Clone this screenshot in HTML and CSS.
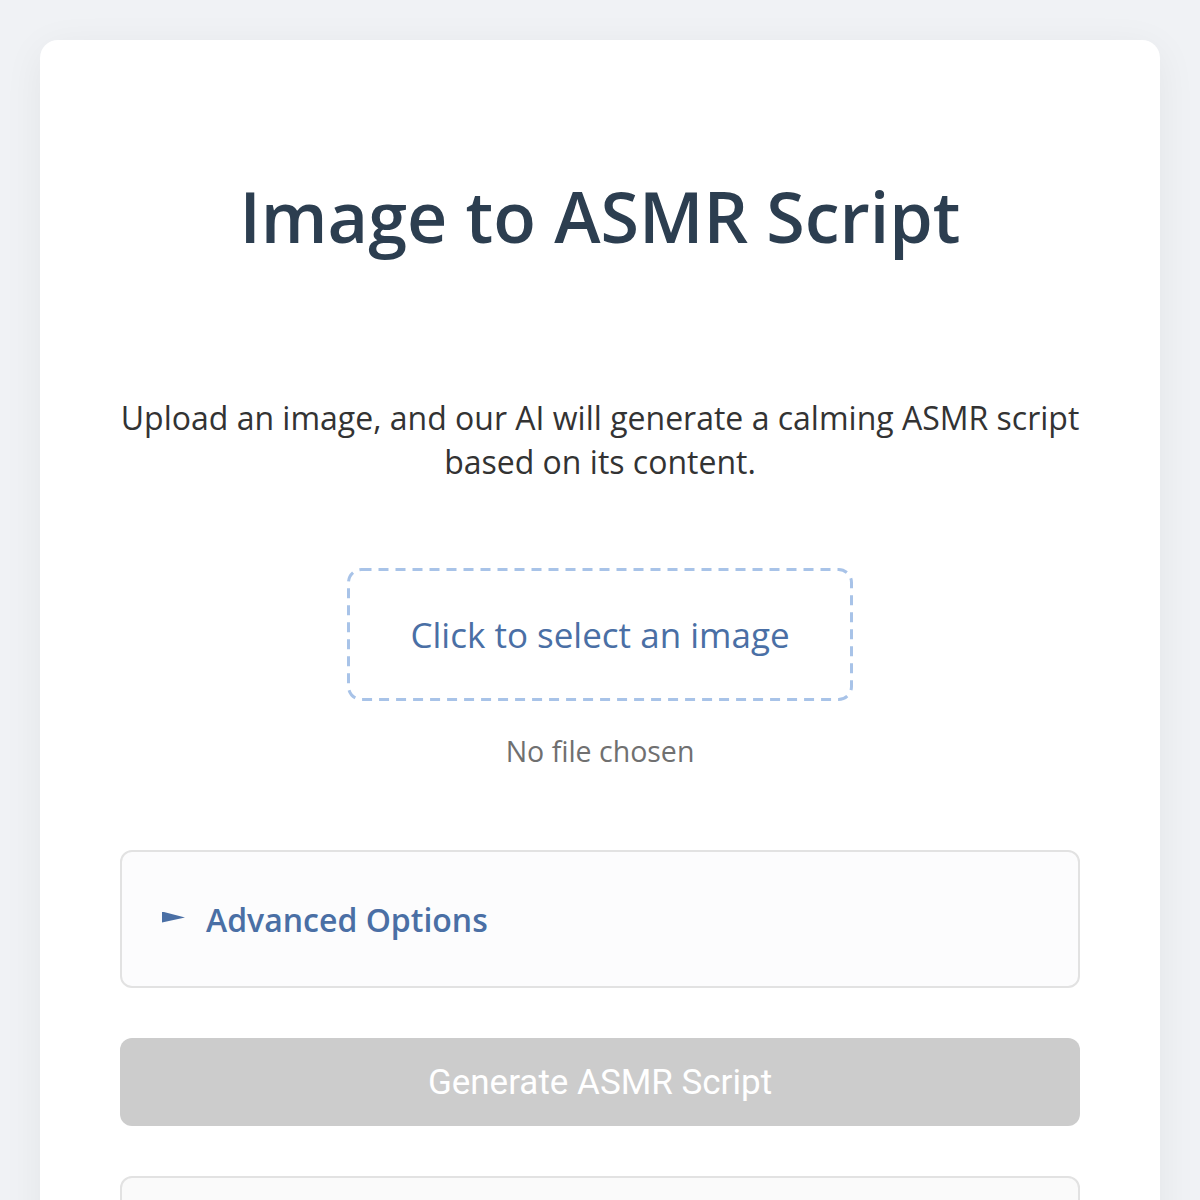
FILE: index.html
```html
<!DOCTYPE html>
<html lang="en">
<head>
    <meta charset="UTF-8">
    <meta name="viewport" content="width=device-width, initial-scale=1.0">
    <title>Image to ASMR Script</title>
    <link rel="stylesheet" href="styles.css">
</head>
<body>
    <div class="container">
        <h1>Image to ASMR Script</h1>
        <p class="intro">Upload an image, and our AI will generate a calming ASMR script based on its content.</p>

        <div class="upload">
            <label class="upload-box" for="imageInput">Click to select an image</label>
            <input type="file" id="imageInput" accept="image/*">
            <div class="file-name">No file chosen</div>
        </div>

        <details class="options">
            <summary>Advanced Options</summary>
        </details>

        <button class="generate" disabled>Generate ASMR Script</button>

        <div class="result">
            <!-- Script will appear here -->
        </div>
    </div>
</body>
</html>
```

FILE: styles.css
```css
body {
    font-family: "Open Sans", sans-serif;
    margin: 0;
    padding: 40px;
    background: #f0f2f5;
    color: #333;
}
.container {
    background: white;
    padding: 80px 80px 40px;
    border-radius: 18px;
    box-shadow: 0 8px 40px rgba(0, 0, 0, 0.06);
    min-height: 1200px;
}
h1 {
    text-align: center;
    color: #2c3e50;
    font-size: 70px;
    font-weight: 600;
    margin: 54px 0 0;
    line-height: 1.2;
}
.intro {
    text-align: center;
    font-size: 32px;
    line-height: 44px;
    margin: 138px 0 0;
}
.upload {
    text-align: center;
    margin-top: 84px;
}
.upload-box {
    display: inline-block;
    width: 506px;
    height: 133px;
    line-height: 133px;
    background: url("data:image/svg+xml,%3Csvg xmlns='http://www.w3.org/2000/svg' width='506' height='133'%3E%3Crect x='1.5' y='1.5' width='503' height='130' rx='13' fill='none' stroke='%23a8c3e8' stroke-width='3' stroke-dasharray='10 7'/%3E%3C/svg%3E") no-repeat;
    color: #4a6fa5;
    font-size: 35px;
    cursor: pointer;
}
.upload input {
    display: none;
}
.file-name {
    color: #707070;
    font-size: 28.5px;
    margin-top: 31px;
}
.options {
    margin-top: 80px;
    border: 2px solid #e2e2e2;
    border-radius: 12px;
    background: #fcfcfd;
    padding: 0 40px;
}
.options summary {
    list-style: none;
    display: flex;
    align-items: center;
    gap: 21px;
    font-size: 32px;
    font-weight: 600;
    color: #4a6fa5;
    height: 134px;
    cursor: pointer;
}
.options summary::-webkit-details-marker {
    display: none;
}
.options summary::before {
    content: "";
    width: 23px;
    height: 11px;
    background: #4a6fa5;
    clip-path: polygon(0 0, 100% 55%, 0 100%);
    margin-top: -4px;
}
.generate {
    display: block;
    width: 100%;
    margin-top: 50px;
    height: 88px;
    border: none;
    border-radius: 12px;
    background: #cccccc;
    color: white;
    font-family: Roboto, sans-serif;
    font-size: 35px;
}
.result {
    margin-top: 50px;
    height: 200px;
    border: 2px solid #e2e2e2;
    border-radius: 12px;
    background: #fafafa;
}
```
